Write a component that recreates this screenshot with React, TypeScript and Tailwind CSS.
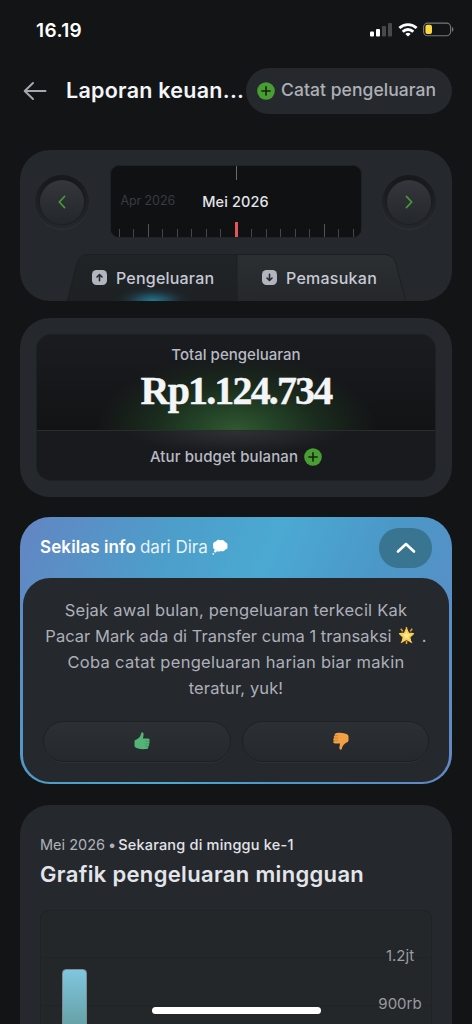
import React from "react";

const weekLabels = ["1.2jt", "900rb"];
const ticks = Array.from({ length: 17 }, (_, i) => i);

const PlusCircle = () => (
  <svg className="h-[18px] w-[18px] shrink-0" viewBox="0 0 18 18" fill="none">
    <circle cx="9" cy="9" r="8.8" fill="#489e33" />
    <path d="M9 4.9v8.2M4.9 9h8.2" stroke="#15240f" strokeWidth="1.6" strokeLinecap="round" />
  </svg>
);

const StatusBar = () => (
  <div className="flex h-[60px] shrink-0 items-center justify-between pl-9 pr-[18px]">
    <p className="text-[19px] font-semibold leading-none tracking-[0.4px] text-white">16.19</p>
    <div className="flex items-center">
      <svg className="h-4 w-[22px]" viewBox="0 0 22 16">
        <rect x="0" y="9.5" width="4" height="5" rx="1" fill="#fff" />
        <rect x="6" y="7" width="4" height="7.5" rx="1" fill="#fff" />
        <rect x="12" y="4" width="4" height="10.5" rx="1" fill="#48494b" />
        <rect x="18" y="1" width="4" height="13.5" rx="1" fill="#48494b" />
      </svg>
      <svg className="ml-[6px] h-4 w-5" viewBox="0 0 20 16" fill="none" stroke="#fff" strokeWidth="2.8">
        <path d="M1.4 6.1a12.3 12.3 0 0 1 17.2 0" />
        <path d="M4.7 9.7a7.5 7.5 0 0 1 10.6 0" />
        <path d="M10 14.6 7.3 12a3.8 3.8 0 0 1 5.4 0z" fill="#fff" stroke="none" />
      </svg>
      <svg className="ml-[5px] h-4 w-[31px]" viewBox="0 0 31 16" fill="none">
        <rect x="0.6" y="1.1" width="27" height="12.6" rx="4" stroke="#77787a" strokeWidth="1.1" />
        <rect x="2.4" y="2.7" width="6.6" height="9.4" rx="2" fill="#fbd83f" />
        <path d="M29 5c1.8.6 1.8 4.2 0 4.8z" fill="#77787a" />
      </svg>
    </div>
  </div>
);

const Header = () => (
  <header className="flex h-[61px] shrink-0 items-center pl-[23px] pr-5">
    <svg className="h-5 w-6 shrink-0" viewBox="0 0 24 20" fill="none" stroke="#a6a8ae" strokeWidth="2" strokeLinecap="round" strokeLinejoin="round">
      <path d="M22.5 10H2M10 2l-8.3 8 8.3 8" />
    </svg>
    <h1 className="ml-[19px] w-[180px] whitespace-nowrap text-[21.5px] font-semibold tracking-[0.26px] text-[#f4f5f8]">
      Laporan keuan...
    </h1>
    <button className="flex h-[46px] w-[206px] items-center rounded-full bg-[#25282c] pl-[11px]">
      <PlusCircle />
      <span className="ml-[6px] whitespace-nowrap text-[17.5px] font-medium tracking-[0.06px] text-[#aeb0b7]">
        Catat pengeluaran
      </span>
    </button>
  </header>
);

const Knob = ({ d }: { d: string }) => (
  <button className="flex h-[54px] w-[54px] items-center justify-center rounded-full bg-linear-to-b from-[#17191c] to-[#26292d] shadow-[0_1px_1px_#303438]">
    <span className="flex h-11 w-11 items-center justify-center rounded-full bg-linear-to-b from-[#34363b] to-[#24272b] shadow-[0_0_3px_#141619]">
      <svg className="h-[18px] w-4" viewBox="0 0 16 18" fill="none" stroke="#479a34" strokeWidth="1.8" strokeLinecap="round" strokeLinejoin="round">
        <path d={d} />
      </svg>
    </span>
  </button>
);

const TabIcon = ({ up }: { up?: boolean }) => (
  <svg className="h-[15px] w-[15px] shrink-0" viewBox="0 0 15 15" fill="none">
    <rect width="15" height="15" rx="4.5" fill="#b2b4be" />
    <path
      d={up ? "M7.5 10.7V5.2M5 7l2.5-2.5L10 7" : "M7.5 4.3v5.5M5 8l2.5 2.5L10 8"}
      stroke="#272a2f"
      strokeWidth="1.6"
      strokeLinecap="round"
      strokeLinejoin="round"
    />
  </svg>
);

const MonthPicker = () => (
  <section className="flex h-[151px] shrink-0 flex-col overflow-hidden rounded-[30px] bg-[#25292d]">
    <div className="flex items-start justify-between pl-[15px] pr-[16px] pt-[15px]">
      <div className="pt-[10px]">
        <Knob d="M10.5 3.5 5.3 9l5.2 5.5" />
      </div>
      <div className="relative flex h-[73px] w-[252px] items-center overflow-hidden rounded-[9px] border border-[#1f2226] bg-[#101113]">
        <span className="ml-[10px] text-[12.5px] tracking-[-0.1px] text-[#393b3e]">Apr 2026</span>
        <span className="absolute left-0 right-0 text-center text-[14.5px] font-medium tracking-[0.1px] text-[#e4e5ea]">
          Mei 2026
        </span>
        <span className="absolute left-[125px] top-0 h-[14px] w-px bg-[#696a6c]" />
        <div className="absolute bottom-0 left-[8px] flex w-[235px] items-end justify-between">
          {ticks.map((t) => (
            <span
              key={t}
              className={
                t === 8
                  ? "h-[15px] w-[3px] bg-[#e5545a]"
                  : t === 2 || t === 14
                    ? "h-[13px] w-px bg-[#515355]"
                    : "h-2 w-px bg-[#444648]"
              }
            />
          ))}
        </div>
      </div>
      <div className="pt-[10px]">
        <Knob d="m5.5 3.5 5.2 5.5-5.2 5.5" />
      </div>
    </div>
    <div className="relative mx-auto mt-4 flex h-12 w-[340px]">
      <svg className="absolute inset-0 h-12 w-[340px]" viewBox="0 0 340 48" fill="none">
        <defs>
          <linearGradient id="tabOn" x1="0" y1="0" x2="0" y2="1">
            <stop stopColor="#202427" />
            <stop offset="1" stopColor="#1d2124" />
          </linearGradient>
          <linearGradient id="tabOff" x1="0" y1="0" x2="0" y2="1">
            <stop stopColor="#2b2f32" />
            <stop offset="1" stopColor="#24282b" />
          </linearGradient>
          <radialGradient id="tabGlow">
            <stop stopColor="#287f9b" stopOpacity="0.95" />
            <stop offset="0.4" stopColor="#23657a" stopOpacity="0.6" />
            <stop offset="1" stopColor="#1d2124" stopOpacity="0" />
          </radialGradient>
        </defs>
        <path d="M0 48 10 10C12 3 16 1 22 1h149v47z" fill="url(#tabOn)" />
        <ellipse cx="87" cy="47" rx="40" ry="15" fill="url(#tabGlow)" />
        <path d="M171 1h147c6 0 10 3 12 9l10 38H171z" fill="url(#tabOff)" />
        <path d="M2 48 11 10C13 3 16 .5 22 .5h296c6 0 10 3 12 9L340 48M171 1v47" stroke="#1d2023" />
      </svg>
      <button className="relative flex w-[171px] items-center pl-[26px]">
        <TabIcon up />
        <span className="ml-[9px] text-[16px] font-medium tracking-[0.2px] text-[#c7c9d5]">Pengeluaran</span>
      </button>
      <button className="relative flex items-center pl-[25px]">
        <TabIcon />
        <span className="ml-[9px] text-[16px] font-medium tracking-[0.25px] text-[#c7c9d5]">Pemasukan</span>
      </button>
    </div>
  </section>
);

const TotalCard = () => (
  <section className="mt-[17px] h-[179px] shrink-0 rounded-[30px] bg-[#25292d] p-4">
    <div className="flex h-[147px] flex-col overflow-hidden rounded-[15px] border border-[#1e2124] bg-[#191a1d] text-center">
      <div className="h-[96px] border-b border-[#2a2d2d] bg-[radial-gradient(140px_74px_at_50%_100%,#315831_0%,#234226_30%,#1a2b1d_60%,transparent_100%),linear-gradient(#1b1c1f,#121315)] pt-[10px]">
        <p className="text-[15px] leading-5 font-medium tracking-[0.02px] text-[#b8bac3]">Total pengeluaran</p>
        <p className="mt-[8px] flex justify-center whitespace-nowrap font-['Liberation_Serif',serif] text-[40px] font-bold leading-[36px] tracking-[-1.85px] text-[#f4f5f7] [-webkit-text-stroke:0.4px_#f4f5f7]">
          Rp1.124.734
        </p>
      </div>
      <div className="flex flex-1 items-center justify-center bg-[radial-gradient(110px_22px_at_50%_0%,#303134,transparent)] pt-[3px]">
        <span className="text-[15px] font-medium tracking-[0.1px] text-[#b8bac5]">Atur budget bulanan</span>
        <span className="ml-[6px]">
          <PlusCircle />
        </span>
      </div>
    </div>
  </section>
);

const Bubble = () => (
  <svg className="ml-[4px] h-[17px] w-4" viewBox="0 0 16 17" fill="#fff">
    <path d="M4 2.5C5 .5 7 .3 8.5 1.3c2-.8 4 .1 4.5 1.7 2 .5 3 2.2 2.3 3.7.8 2-.2 3.5-2 3.9-.8 1.8-3 2.2-4.6 1.3-1.8 1.1-4 .6-4.7-1C1.8 10.7.6 9 1.3 7.2.3 5 1.5 2.8 4 2.5z" />
    <circle cx="3.3" cy="12.3" r="1.3" />
    <circle cx="1.3" cy="14.8" r="0.9" />
  </svg>
);

const Star = () => (
  <svg className="mx-[2px] inline-block h-[17px] w-[17px] align-[-2px]" viewBox="0 0 17 17">
    <path
      d="M8.5 0v3M2.8 1.8l2 2.6M14.2 1.8l-2 2.6M3.2 15.8l1-1.5M13.8 15.8l-1-1.5M8.5 17v-3"
      stroke="#e9a63a"
      strokeWidth="1.5"
    />
    <path
      d="m8.5 1.9 2 4.2 4.9.6-3.6 3.3.9 4.8-4.2-2.4-4.2 2.4.9-4.8-3.6-3.3 4.9-.6z"
      fill="#fbcf50"
      stroke="#fbcf50"
      strokeWidth="1.3"
      strokeLinejoin="round"
    />
    <path d="m8.500 4.200 1 2.900 3 .3-2.300 1.900.7 2.900-2.400-1.600-2.400 1.600.7-2.900-2.300-1.900 3-.3z" fill="#fdeb9b" />
  </svg>
);

const Thumb = ({ down }: { down?: boolean }) => (
  <svg
    className={down ? "h-[18px] w-4 -scale-y-100 -scale-x-100" : "h-[18px] w-4"}
    viewBox="0 0 16 18"
    fill={down ? "#f3a044" : "#54b478"}
  >
    <path d="M7.5.4c1.4-.4 2.2.6 2.1 2.1-.1 1.5-.4 2.8-.7 4.1h5.2c1.7 0 2.1 2 .9 2.700 1.100.7.9 2.200-.1 2.600.7.9.3 2.100-.6 2.400.4 1.400-.6 2.600-2.100 2.700-2.900.3-5.900.2-8-.5C1.500 15.800.5 15 .5 13.500V9.800c0-1.300.7-2 2-2.200C4.500 6.500 6.400 4.500 6.800 2.500z" />
    <path
      d="M11 9.3h4M11 11.9h4M11 14.4h3.3"
      stroke={down ? "#b5722e" : "#37885a"}
      strokeWidth="0.6"
      fill="none"
    />
  </svg>
);

const InfoCard = () => (
  <section className="mt-5 h-[267px] shrink-0 rounded-[30px] bg-[linear-gradient(115deg,#6385c3_0%,#4c9fca_30%,#4ba9d2_48%,#4b98c8_68%,#6288c4_100%)] px-[3px] pb-[2px]">
    <div className="flex h-[61px] items-center justify-between px-[17px]">
      <div className="flex items-center whitespace-nowrap text-[17px] text-[#e9f3fa]">
        <b className="font-semibold tracking-[0.12px] text-white">Sekilas info</b>
        <span className="ml-[4px]">dari Dira</span>
        <Bubble />
      </div>
      <button className="flex h-10 w-[53px] items-center justify-center rounded-[20px] bg-[#397491]">
        <svg className="h-3 w-5" viewBox="0 0 20 12" fill="none" stroke="#fff" strokeWidth="2.6" strokeLinecap="round" strokeLinejoin="round">
          <path d="m2 9.500 8-7.500 8 7.500" />
        </svg>
      </button>
    </div>
    <div className="h-[204px] rounded-[27px] bg-[#25282d] px-5 pt-[19px]">
      <div className="whitespace-nowrap text-center text-[16.5px] leading-[26px] text-[#adb0ba]">
        <p className="tracking-[0.22px]">Sejak awal bulan, pengeluaran terkecil Kak</p>
        <p className="tracking-[0.03px]">
          Pacar Mark ada di Transfer cuma 1 transaksi <Star /> .
        </p>
        <p className="tracking-[0.28px]">Coba catat pengeluaran harian biar makin</p>
        <p className="tracking-[0.12px]">teratur, yuk!</p>
      </div>
      <div className="mt-[20px] flex gap-[11px]">
        <button className="flex h-[41px] flex-1 items-center justify-center rounded-full border border-[#1e2124] bg-linear-to-b from-[#2c3034] to-[#25282c] pb-[2px] pl-[11px] shadow-[0_1px_1px_#2d3135]">
          <Thumb />
        </button>
        <button className="flex h-[41px] flex-1 items-center justify-center rounded-full border border-[#1e2124] bg-linear-to-b from-[#2c3034] to-[#25282c] pb-[2px] pl-[11px] shadow-[0_1px_1px_#2d3135]">
          <Thumb down />
        </button>
      </div>
    </div>
  </section>
);

const ChartCard = () => (
  <section className="mt-[21px] h-[260px] shrink-0 rounded-t-[30px] bg-[#25292d] px-5 pt-[30px]">
    <p className="flex whitespace-nowrap text-[14.5px] leading-5 text-[#b0b2ba]">
      Mei 2026
      <span className="ml-[3px]">•</span>
      <span className="ml-[2px] font-medium tracking-[0.2px] text-[#e2e3e8]">Sekarang di minggu ke-1</span>
    </p>
    <h2 className="mt-[4px] whitespace-nowrap text-[22px] font-semibold leading-[30px] tracking-[0.33px] text-[#e4e5eb]">
      Grafik pengeluaran mingguan
    </h2>
    <div className="relative mt-[21px] h-[170px] rounded-t-[8px] border border-[#1f2326] bg-[#23272a]">
      {weekLabels.map((label) => (
        <div key={label} className="flex h-[48px] items-end border-b border-[#202427] first:h-[47px]">
          <span className="mb-[-11px] ml-auto w-[62px] text-center text-[15px] leading-6 text-[#9a9ca0]">{label}</span>
        </div>
      ))}
      <div className="absolute left-[21px] top-[58px] h-[120px] w-[25px] rounded-t-[4px] border border-[#7d8d92] bg-linear-to-b from-[#80c6df] to-[#4a786a]" />
    </div>
  </section>
);

const App = () => {
  return (
    <main className="relative flex h-[1024px] w-[472px] flex-col overflow-hidden bg-[#131416] font-['Inter','Liberation_Sans',sans-serif]">
      <StatusBar />
      <Header />
      <div className="flex flex-col px-5 pt-[29px]">
        <MonthPicker />
        <TotalCard />
        <InfoCard />
        <ChartCard />
      </div>
      <div className="absolute left-[152px] top-[1007px] h-[7px] w-[169px] rounded-full bg-white" />
    </main>
  );
};

export default App;
